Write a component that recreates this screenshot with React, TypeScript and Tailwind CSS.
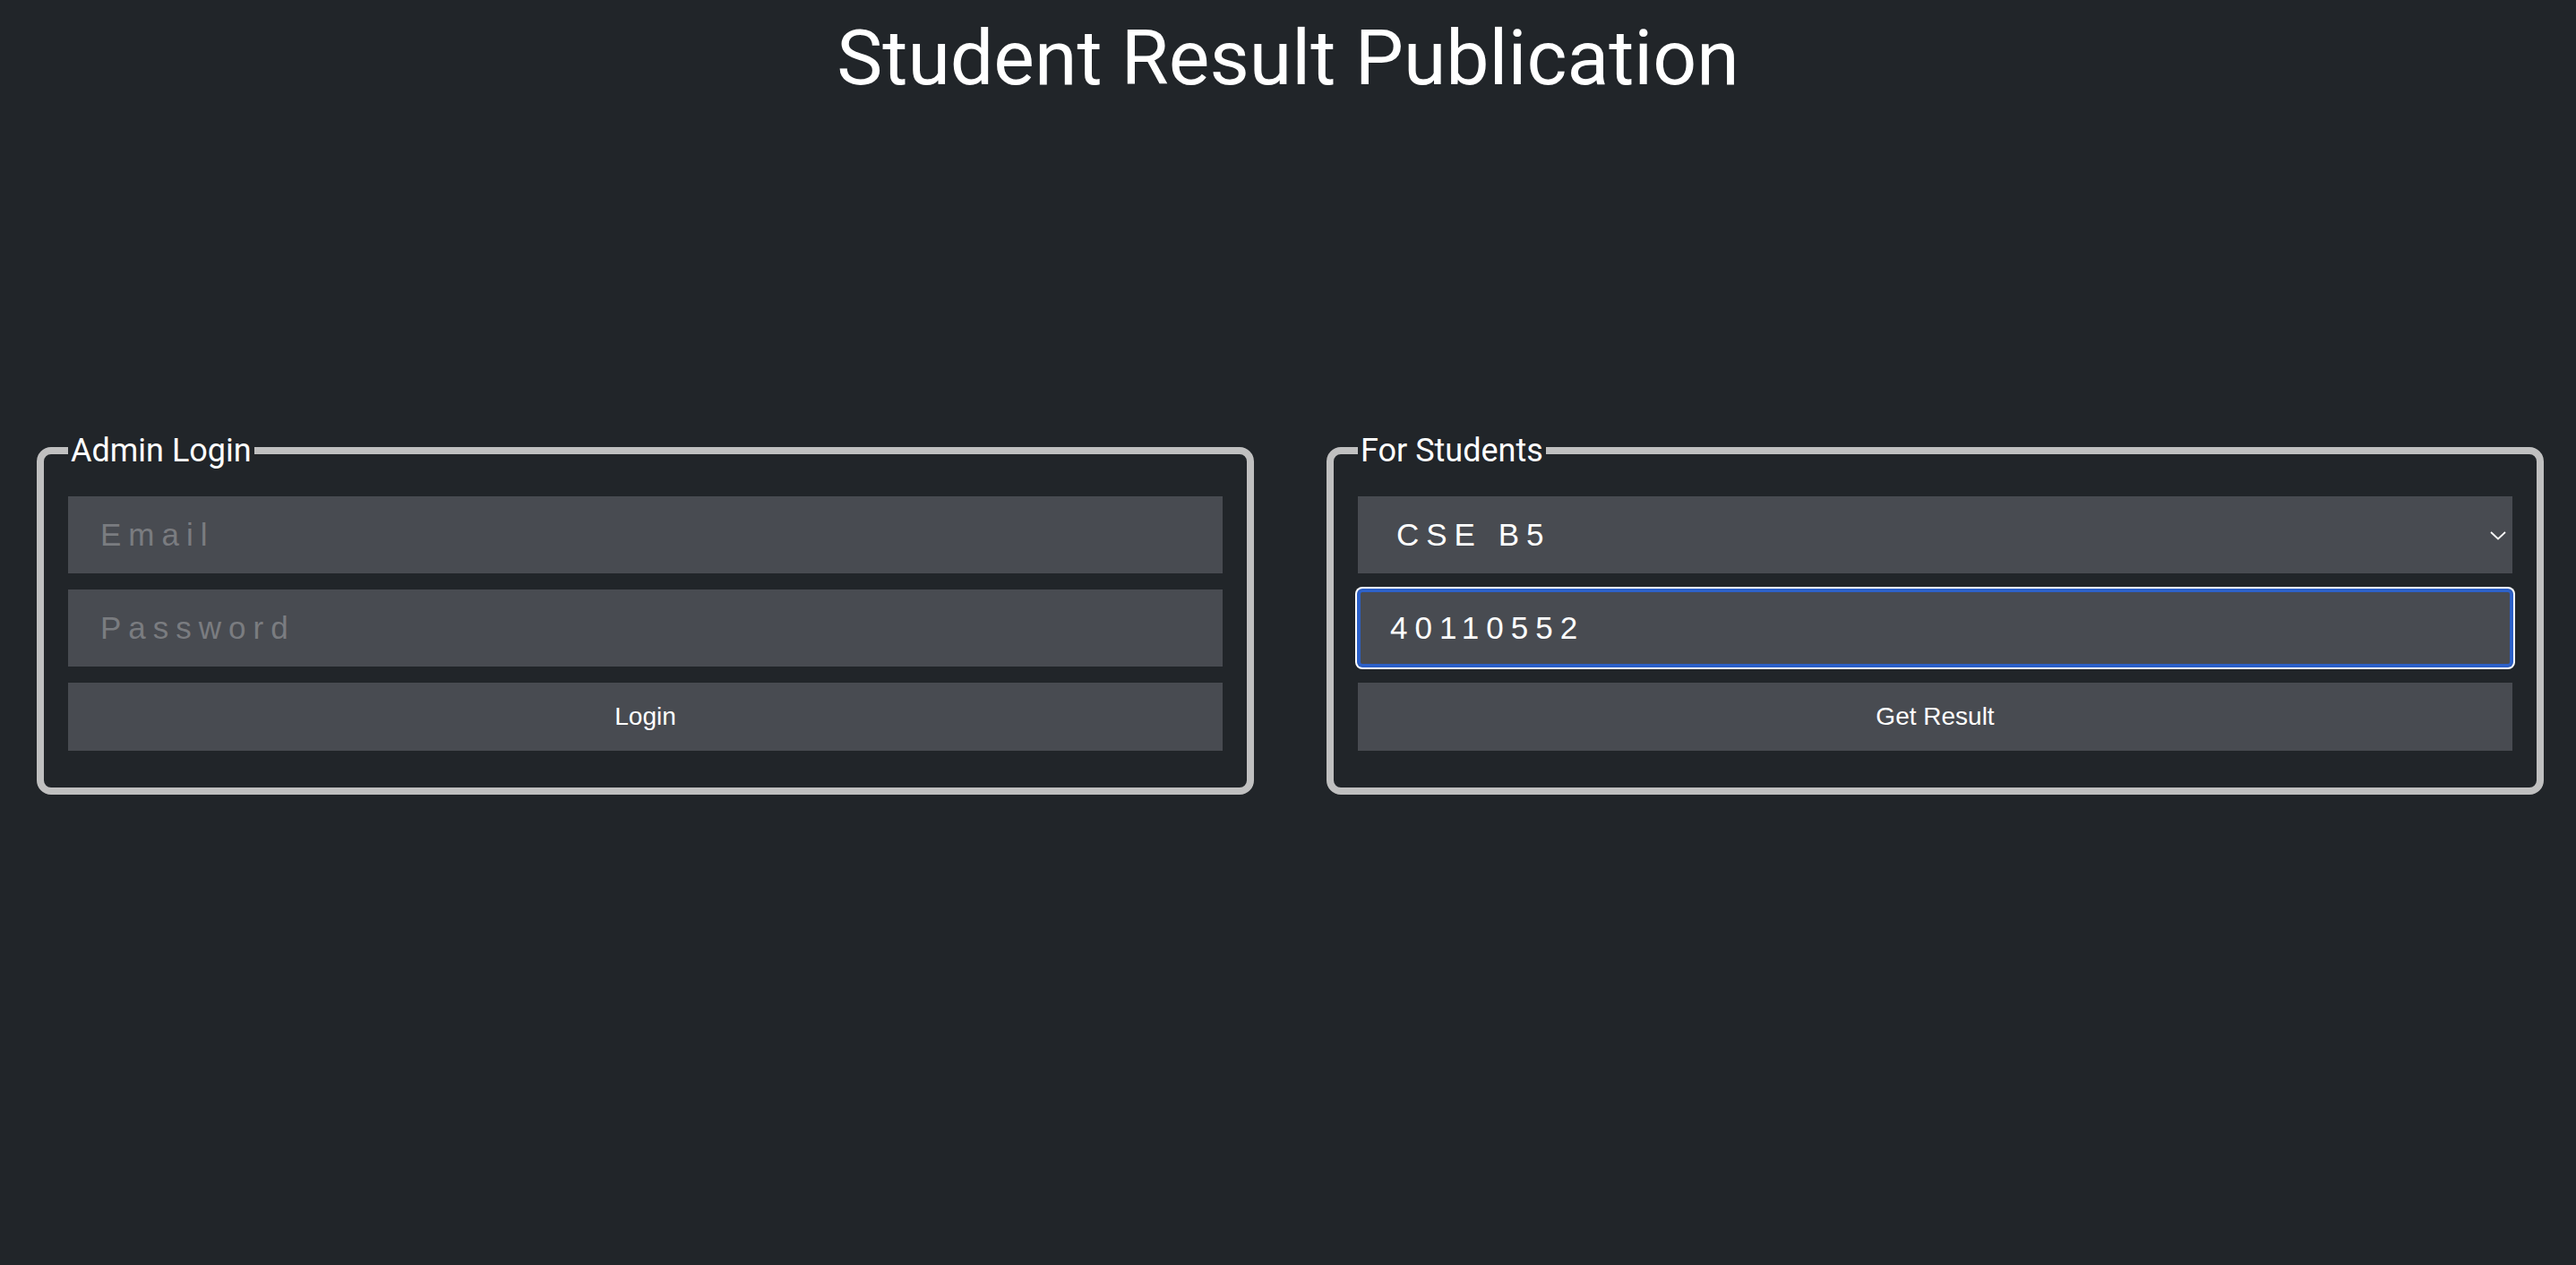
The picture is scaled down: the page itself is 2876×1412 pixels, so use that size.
import React from "react";

function Field({ placeholder, value, focused }: { placeholder?: string; value?: string; focused?: boolean }) {
  return (
    <input
      type="text"
      readOnly
      placeholder={placeholder}
      defaultValue={value}
      className={
        "block h-[86px] w-full bg-[#484b51] pl-[36px] pr-[20px] font-['Liberation_Sans',Arial,sans-serif] text-[35px] tracking-[8px] text-white outline-none placeholder:text-[#7a7c80] " +
        (focused
          ? "rounded-[5px] shadow-[inset_0_0_0_3px_#2c60c8,0_0_0_1px_#2c60c8,0_0_0_3px_#ffffff]"
          : "")
      }
    />
  );
}

function Btn({ label }: { label: string }) {
  return (
    <button
      type="button"
      className="block h-[76px] w-full bg-[#484b51] text-center font-['Liberation_Sans',Arial,sans-serif] text-[28px] text-white"
    >
      {label}
    </button>
  );
}

export default function App() {
  return (
    <div className="min-h-[1412px] w-full overflow-hidden bg-[#212529] text-white">
      <h1 className="pt-[13px] text-center font-['Roboto',sans-serif] text-[86px] font-normal leading-[1.21] text-white">
        Student Result Publication
      </h1>
      <div className="mt-[365px] grid grid-cols-2 gap-x-[81px] pl-[41px] pr-[36px]">
        <fieldset className="min-w-0 rounded-[16px] border-[8px] border-solid border-[#c0c0c0] px-[27px] pt-[30px] pb-[41px]">
          <legend className="px-[3px] font-['Roboto',sans-serif] text-[36px] leading-[42px] text-white">
            Admin Login
          </legend>
          <div className="flex flex-col gap-[18px]">
            <Field placeholder="Email" />
            <Field placeholder="Password" />
            <Btn label="Login" />
          </div>
        </fieldset>
        <fieldset className="min-w-0 rounded-[16px] border-[8px] border-solid border-[#c0c0c0] px-[27px] pt-[30px] pb-[41px]">
          <legend className="px-[3px] font-['Roboto',sans-serif] text-[36px] leading-[42px] text-white">
            For Students
          </legend>
          <div className="flex flex-col gap-[18px]">
            <div className="relative h-[86px] w-full">
              <select
                defaultValue="CSE B5"
                className="block h-[86px] w-full appearance-none bg-[#484b51] pl-[43px] font-['Liberation_Sans',Arial,sans-serif] text-[35px] tracking-[8px] text-white outline-none"
              >
                <option>CSE B5</option>
              </select>
              <svg
                className="pointer-events-none absolute right-[7px] top-[39px]"
                width="18"
                height="10"
                viewBox="0 0 18 10"
                fill="none"
              >
                <path d="M1 1L9 8.5L17 1" stroke="#ffffff" strokeWidth="1.8" />
              </svg>
            </div>
            <Field value="40110552" focused />
            <Btn label="Get Result" />
          </div>
        </fieldset>
      </div>
    </div>
  );
}
